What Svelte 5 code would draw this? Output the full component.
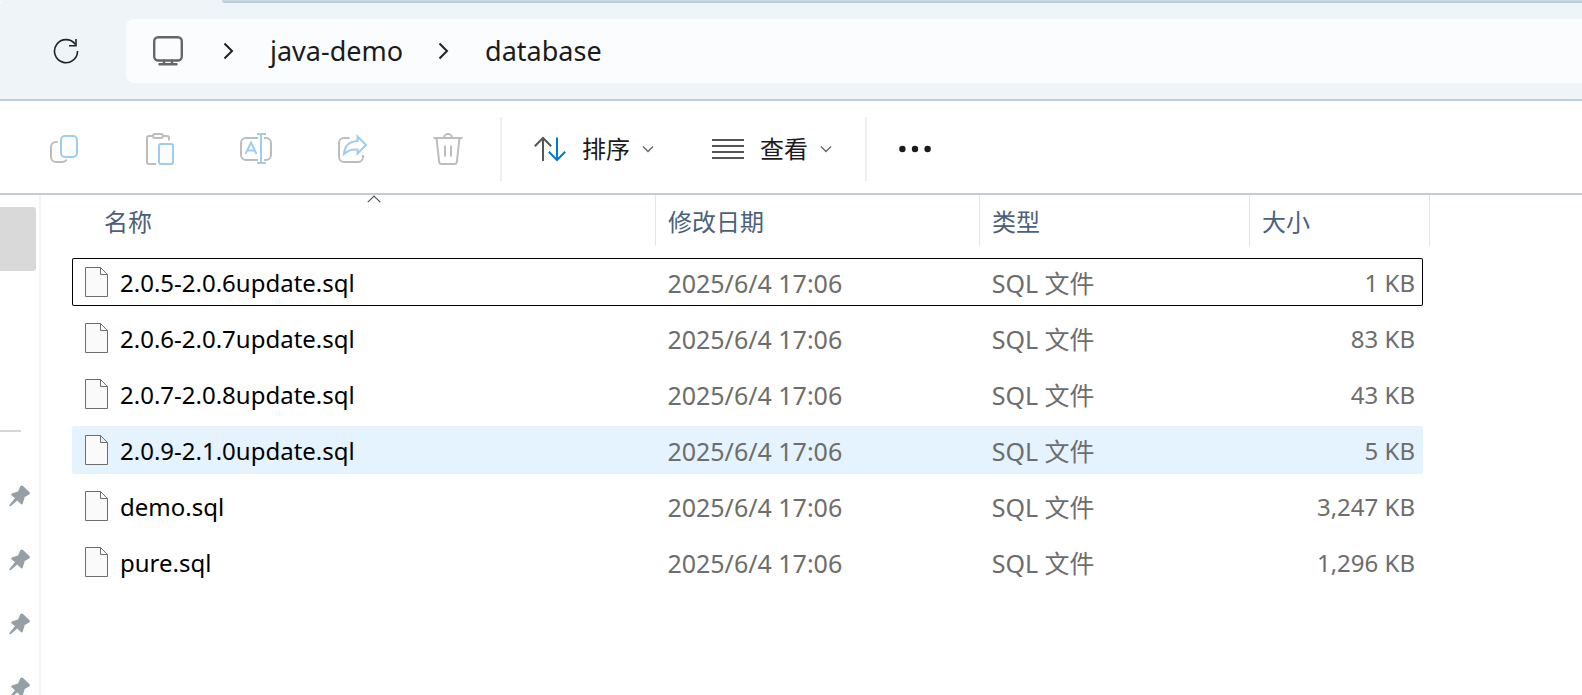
<script>
  const files = [
    { name: '2.0.5-2.0.6update.sql', size: '1 KB', focused: true },
    { name: '2.0.6-2.0.7update.sql', size: '83 KB' },
    { name: '2.0.7-2.0.8update.sql', size: '43 KB' },
    { name: '2.0.9-2.1.0update.sql', size: '5 KB', hovered: true },
    { name: 'demo.sql', size: '3,247 KB' },
    { name: 'pure.sql', size: '1,296 KB' }
  ];
  const modified = '2025/6/4 17:06';
  const kind = 'SQL 文件';
  const pins = [1, 2, 3, 4];
</script>

{#snippet separator()}
  <svg class="crumb-arrow" width="10" height="18" viewBox="0 0 10 18" aria-hidden="true">
    <path d="M.5 1.500 8 9 .5 16.500" />
  </svg>
{/snippet}

{#snippet chevron()}
  <svg class="chevron" width="12" height="8" viewBox="0 0 12 8" aria-hidden="true">
    <path d="M1 1.500 6 6.500 11 1.500" />
  </svg>
{/snippet}

<div class="window" lang="zh-CN">
  <div class="tabs"></div>

  <header class="nav">
    <button class="refresh" aria-label="刷新">
      <svg width="26" height="26" viewBox="0 0 26 26">
        <path d="M24.500 13A11.500 11.500 0 1 1 22.300 6.400" />
        <path d="M23 1v6.800h-7" />
      </svg>
    </button>
    <nav class="address" aria-label="地址">
      <button class="device" aria-label="此电脑">
        <svg width="30" height="30" viewBox="0 0 30 30">
          <rect x="1.200" y="1.200" width="27.600" height="23.300" rx="4" />
          <path d="M11 24.500V28M19 24.500V28M6.500 28.300H23.500" />
        </svg>
      </button>
      {@render separator()}
      <a href="#java-demo">java-demo</a>
      {@render separator()}
      <a href="#database">database</a>
    </nav>
  </header>

  <div class="toolbar" role="toolbar" aria-label="命令">
    <button class="tool" aria-label="复制" disabled>
      <svg width="32" height="32" viewBox="0 0 32 32">
        <path class="gray" d="M9.600 9H8a5 5 0 0 0-5 5v10a5 5 0 0 0 5 5h6.500a5 5 0 0 0 4.200-2.500" />
        <rect class="blue" x="13" y="3" width="16" height="21" rx="4" />
      </svg>
    </button>
    <button class="tool" aria-label="粘贴" disabled>
      <svg width="32" height="32" viewBox="0 0 32 32">
        <path class="gray" d="M8.500 3H5a2 2 0 0 0-2 2v24a2 2 0 0 0 2 2h7M19.500 3H23a2 2 0 0 1 2 2v2.500" />
        <rect class="gray" x="9" y="1" width="10" height="4" rx="2" />
        <rect class="blue" x="15" y="11" width="14" height="20" rx="2" />
      </svg>
    </button>
    <button class="tool" aria-label="重命名" disabled>
      <svg width="32" height="32" viewBox="0 0 32 32">
        <path class="gray" d="M18 5H6a5 5 0 0 0-5 5v12a5 5 0 0 0 5 5h12M24 5h2a5 5 0 0 1 5 5v12a5 5 0 0 1-5 5h-2" />
        <path class="blue" d="M21 1V30M17 1h9M17 30h9M5.500 21 11 9.500 16.500 21M7.300 17.500h7.400" />
      </svg>
    </button>
    <button class="tool" aria-label="共享" disabled>
      <svg width="32" height="32" viewBox="0 0 32 32">
        <path class="gray" d="M13.500 5H8a5 5 0 0 0-5 5v14a5 5 0 0 0 5 5h14a5 5 0 0 0 5-5v-2" />
        <path class="blue" d="M21.500 3.500 30 12l-8.500 8.500V16.500C15.500 16 11.500 17.500 8 21 8.500 13.500 13 8.500 21.500 8z" />
      </svg>
    </button>
    <button class="tool" aria-label="删除" disabled>
      <svg width="32" height="32" viewBox="0 0 32 32">
        <path class="gray" d="M1.500 5h29M12 5a4 4 0 0 1 8 0M4.500 5 7.200 29a2.200 2.200 0 0 0 2.200 2h13.200a2.200 2.200 0 0 0 2.200-2L27.500 5M13 12.500V23.500M19 12.500V23.500" />
      </svg>
    </button>

    <span class="divider"></span>

    <button class="menu">
      <svg width="32" height="32" viewBox="0 0 32 32" aria-hidden="true">
        <path class="dark" d="M9 28V5M.8 13.200 9 5l8.200 8.200" />
        <path class="accent" d="M23 4.500V27M14.800 18.800 23 27l8.200-8.200" />
      </svg>
      <span>排序</span>
      {@render chevron()}
    </button>
    <button class="menu">
      <svg width="32" height="32" viewBox="0 0 32 32" aria-hidden="true">
        <path class="dark" d="M0 7H32M0 13H32M0 19H32M0 25H32" />
      </svg>
      <span>查看</span>
      {@render chevron()}
    </button>

    <span class="divider"></span>

    <button class="menu" aria-label="更多">
      <svg width="32" height="32" viewBox="0 0 32 32">
        <g fill="#1b1b1b">
          <circle cx="3.400" cy="16" r="3.200" />
          <circle cx="16" cy="16" r="3.200" />
          <circle cx="28.600" cy="16" r="3.200" />
        </g>
      </svg>
    </button>
  </div>

  <main>
    <aside>
      <div class="selected"></div>
      <hr />
      <ul>
        {#each pins as pin (pin)}
          <li>
            <svg width="22" height="22" viewBox="0 0 22 22" aria-hidden="true">
              <path d="M11.500 1Q12.700-.2 14 1L20.600 7.200Q21.600 8.700 20 9.600L15.700 12 13.800 18.500Q13 20.200 11.500 18.700L8.200 15.400 2 20.900Q.4 21.700.3 20L6 13.200 2.500 10.300Q1.600 9 3 8.400L9 6.400Z" />
            </svg>
          </li>
        {/each}
      </ul>
    </aside>

    <div class="list">
      <table>
        <thead>
          <tr>
            <th class="first">
              <button>
                <svg class="sorted" width="14" height="8" viewBox="0 0 14 8" aria-hidden="true">
                  <path d="M.8 7.200 7 1l6.200 6.200" />
                </svg>
                名称
              </button>
            </th>
            <th><button>修改日期</button></th>
            <th><button>类型</button></th>
            <th><button>大小</button></th>
          </tr>
        </thead>
        <tbody>
          {#each files as file (file.name)}
            <tr class:focused={file.focused} class:hovered={file.hovered}>
              <td class="name">
                <svg width="24" height="30" viewBox="0 0 24 30" aria-hidden="true">
                  <path d="M1.500.5H16.500L23.500 7.500V29.500H1.500ZM16.500.5V7.500H23.500" />
                </svg>
                {file.name}
              </td>
              <td class="detail">{modified}</td>
              <td class="detail">{kind}</td>
              <td class="size">{file.size}</td>
            </tr>
          {/each}
        </tbody>
      </table>
    </div>
  </main>
</div>

<style>
  :global(body) {
    background: #fff;
  }

  .window {
    --chrome: #eff4f9;
    --edge: #bccddb;
    display: flex;
    flex-direction: column;
    height: 100vh;
    overflow: hidden;
    font-family: 'Noto Sans', 'Noto Sans CJK SC', sans-serif;
    font-size: 24px;
    line-height: 32px;
    color: #1b1b1b;
    background: #fff;
  }

  .window :is(.nav, .toolbar, .tabs) {
    flex: none;
  }

  button {
    margin: 0;
    padding: 0;
    border: 0;
    background: none;
    font: inherit;
    color: inherit;
  }

  svg {
    display: block;
    flex: none;
    fill: none;
  }

  .tabs {
    height: 3px;
    box-sizing: border-box;
    margin-left: 222px;
    border-bottom: 2px solid #b9cddb;
    border-radius: 0 0 0 6px;
    background: #c9dbe7;
    box-shadow: -222px 0 0 var(--chrome);
  }

  .nav {
    display: flex;
    align-items: stretch;
    padding: 16px 0;
    background: var(--chrome);
    border-bottom: 2px solid var(--edge);
  }

  .refresh {
    display: grid;
    place-items: center;
    width: 126px;
    padding-right: 6px;
    padding-left: 12px;
  }

  .refresh svg {
    stroke: #222;
    stroke-width: 1.6;
  }

  .address {
    display: flex;
    flex: 1;
    align-items: center;
    gap: 36px;
    height: 64px;
    padding-left: 27px;
    border-radius: 8px 0 0 8px;
    background: #fbfcfe;
    font-size: 27px;
  }

  .address a {
    color: inherit;
    text-decoration: none;
  }

  .device {
    padding-right: 5px;
  }

  .device svg {
    stroke: #666;
    stroke-width: 2.4;
    stroke-linecap: round;
  }

  .crumb-arrow {
    stroke: #222;
    stroke-width: 2;
  }

  .toolbar {
    display: flex;
    align-items: center;
    height: 88px;
    padding: 4px 16px 0;
    border-bottom: 2px solid var(--edge);
  }

  .toolbar svg {
    stroke-width: 2;
  }

  .tool {
    display: grid;
    place-items: center;
    width: 96px;
    height: 64px;
  }

  .gray {
    stroke: #bdbdbd;
  }

  .blue {
    stroke: #9ecdf1;
  }

  rect.blue {
    fill: #fcfcfc;
  }

  .dark {
    stroke: #555;
  }

  .accent {
    stroke: #0078d4;
  }

  .divider {
    width: 2px;
    height: 64px;
    margin: 0 3px 0 4px;
    background: #efefef;
  }

  .menu {
    display: flex;
    align-items: center;
    height: 64px;
    padding: 0 29px;
  }

  .menu span {
    margin: 0 12px 0 16px;
  }

  .toolbar .chevron {
    stroke: #666;
    stroke-width: 1.4;
  }

  main {
    display: flex;
    flex: 1;
    min-height: 0;
  }

  aside {
    flex: none;
    width: 39px;
    border-right: 2px solid #f5f5f5;
  }

  .selected {
    width: 36px;
    height: 64px;
    margin-top: 12px;
    border-radius: 0 3px 3px 0;
    background: #d9d9d9;
  }

  hr {
    width: 21px;
    height: 2px;
    margin: 159px 0 32px;
    border: 0;
    background: #d5d5d5;
  }

  ul {
    margin: 0;
    padding: 0;
    list-style: none;
  }

  li {
    display: grid;
    align-items: center;
    height: 64px;
    padding-left: 9px;
  }

  li path {
    fill: #959fa6;
  }

  .list {
    flex: 1;
    min-width: 0;
    padding: 0 152px 0 31px;
  }

  table,
  thead,
  tbody {
    display: grid;
  }

  tr {
    display: grid;
    grid-template-columns: 583fr 324fr 270fr 173fr;
  }

  thead tr {
    grid-template-columns: 584fr 324fr 270fr 180fr;
  }

  th {
    display: flex;
    padding: 0;
    border-right: 1px solid #e5e5e5;
    font-weight: 400;
    color: #4c607a;
  }

  th button {
    position: relative;
    flex: 1;
    height: 51px;
    padding: 2px 12px 0;
    text-align: left;
  }

  .first {
    padding-left: 20px;
  }

  .sorted {
    position: absolute;
    top: 0;
    left: 50%;
    margin-left: -7px;
    stroke: #555;
    stroke-width: 1.2;
  }

  tbody {
    gap: 8px;
    padding: 12px 7px 0 0;
  }

  tbody tr {
    height: 48px;
    border-radius: 2px;
  }

  td {
    display: flex;
    align-items: center;
    padding: 2px 8px 0 12px;
    color: #6d6d6d;
    white-space: nowrap;
  }

  .name {
    gap: 12px;
    color: #000;
  }

  .name svg {
    fill: #fafafa;
    stroke: #6d6d6d;
    margin-bottom: 2px;
  }

  .detail {
    font-size: 25px;
  }

  .size {
    justify-content: flex-end;
  }

  .focused {
    box-shadow: inset 0 0 0 1px #000;
  }

  .hovered {
    background: #e5f3ff;
  }
</style>
